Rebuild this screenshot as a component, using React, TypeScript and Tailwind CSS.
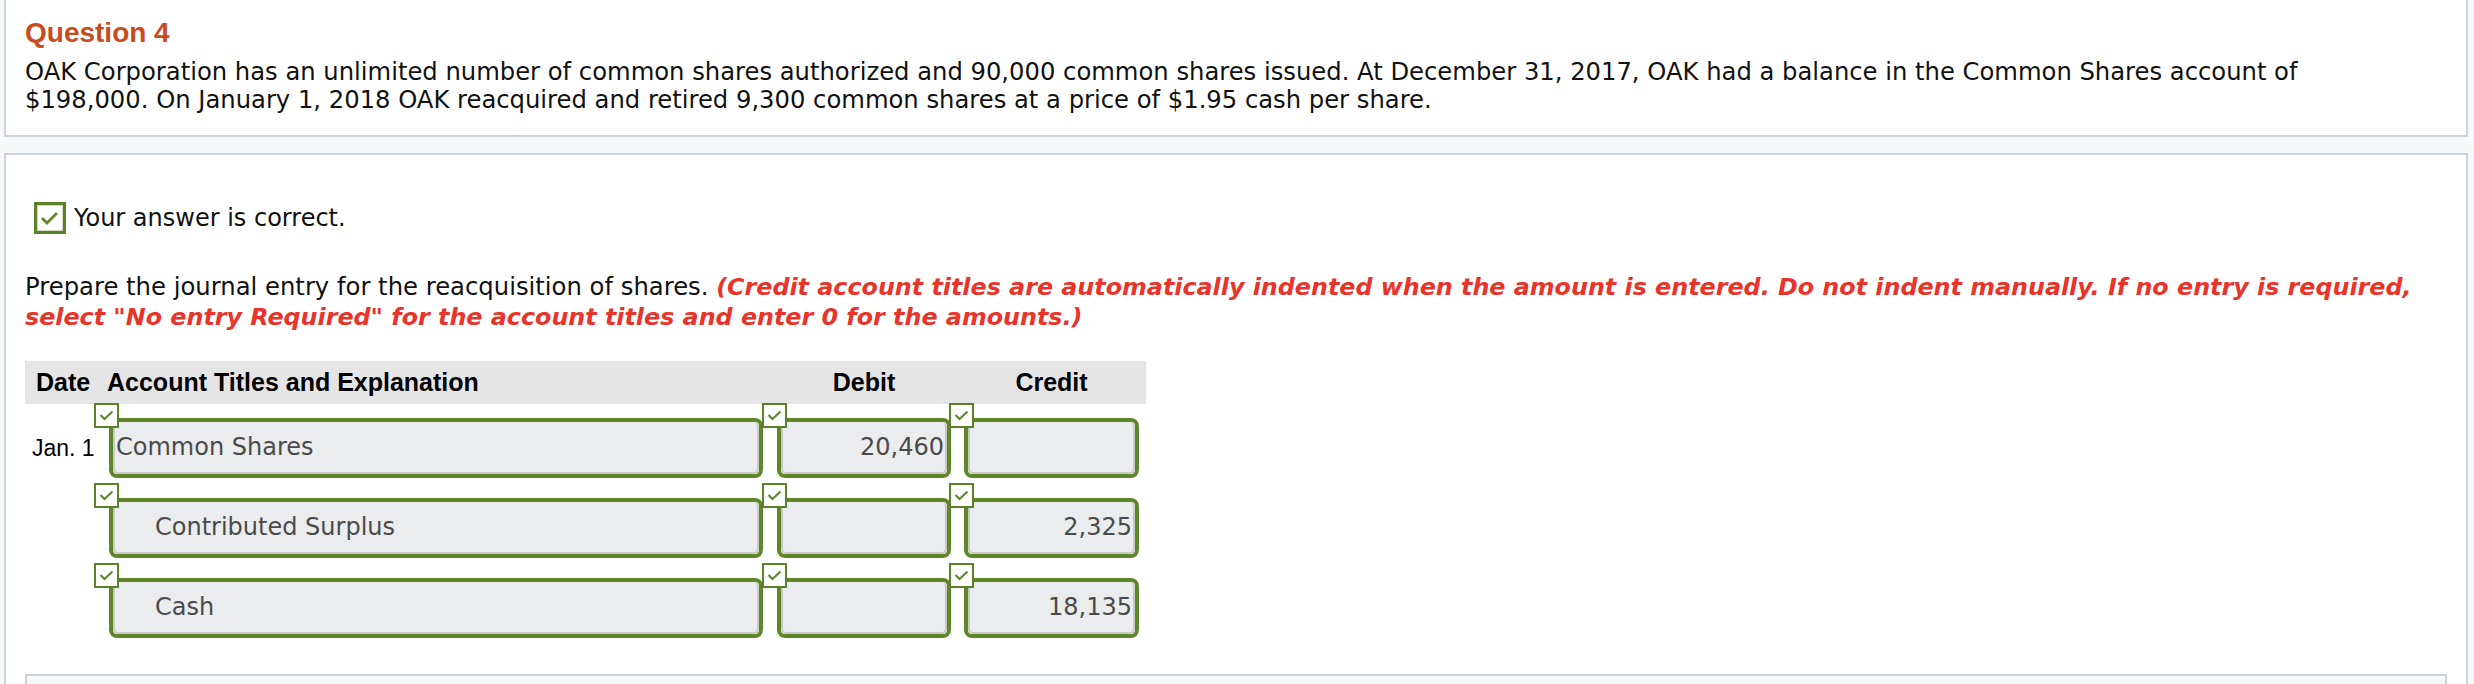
import React from "react";

const GREEN = "#5f8628";

function BigCheck() {
  return (
    <div className="flex h-[32px] w-[32px] items-center justify-center border-[3px] border-[#5b8226] bg-white">
      <div className="flex h-full w-full items-center justify-center border border-[#cfd9c4]">
        <svg width="20" height="16" viewBox="0 0 20 16">
          <polyline points="2,8 7,13 17,3" fill="none" stroke={GREEN} strokeWidth="2.8" />
        </svg>
      </div>
    </div>
  );
}

function SmallCheck() {
  return (
    <div className="absolute -left-[19px] -top-[19px] flex h-[25px] w-[25px] items-center justify-center border-2 border-[#5b8226] bg-white">
      <svg width="15" height="11" viewBox="0 0 15 11">
        <polyline points="1.5,5 5.5,9 13.5,1.5" fill="none" stroke={GREEN} strokeWidth="2" />
      </svg>
    </div>
  );
}

function Field({
  width,
  text,
  align,
  indent,
}: {
  width: string;
  text: string;
  align: "left" | "right";
  indent?: boolean;
}) {
  return (
    <div className={`pt-[14px] ${width}`}>
      <div className="relative h-[60px] rounded-[8px] border-[4px] border-[#5f8628]">
        <div
          className={`flex h-full items-center rounded-[5px] border-x-2 border-b-2 border-[#c7c8ca] bg-[#ebecee] text-[24px] text-[#4a4a4a] ${
            align === "right" ? "justify-end pr-[1px]" : indent ? "pl-[40px]" : "pl-[1px]"
          }`}
        >
          {text}
        </div>
        <SmallCheck />
      </div>
    </div>
  );
}

const rows = [
  { date: "Jan. 1", acct: "Common Shares", indent: false, debit: "20,460", credit: "" },
  { date: "", acct: "Contributed Surplus", indent: true, debit: "", credit: "2,325" },
  { date: "", acct: "Cash", indent: true, debit: "", credit: "18,135" },
];

export default function App() {
  return (
    <div className="h-[684px] w-[2474px] overflow-hidden bg-[#f7f8fa] font-['DejaVu_Sans',sans-serif] text-[#111]">
      {/* Question panel */}
      <div className="ml-[4px] h-[137px] w-[2464px] border-x-2 border-b-2 border-[#cdd3dd] bg-white pl-[19px] pt-[18px]">
        <div className="font-['Liberation_Sans',Arial,sans-serif] text-[28px] font-bold leading-[30px] text-[#c84b1e]">
          Question 4
        </div>
        <p className="mt-[10px] whitespace-nowrap text-[24.25px] leading-[28px]">
          OAK Corporation has an unlimited number of common shares authorized and 90,000 common shares issued. At December 31, 2017, OAK had a balance in the Common Shares account of
          <br />
          $198,000. On January 1, 2018 OAK reacquired and retired 9,300 common shares at a price of $1.95 cash per share.
        </p>
      </div>

      {/* Answer panel */}
      <div className="ml-[4px] mt-[16px] h-[600px] w-[2464px] border-x-2 border-t-2 border-[#cdd3dd] bg-white px-[19px] pt-[47px]">
        <div className="flex h-[32px] items-center">
          <div className="ml-[9px]">
            <BigCheck />
          </div>
          <span className="ml-[8px] text-[24px] leading-[28px]">Your answer is correct.</span>
        </div>

        <p className="mt-[38px] whitespace-nowrap text-[24.3px] leading-[30px]">
          Prepare the journal entry for the reacquisition of shares.{" "}
          <span className="text-[23.8px] font-bold italic text-[#e8342a]">
            (Credit account titles are automatically indented when the amount is entered. Do not indent manually. If no entry is required,
            <br />
            select "No entry Required" for the account titles and enter 0 for the amounts.)
          </span>
        </p>

        {/* Table header */}
        <div className="mt-[29px] flex h-[43px] w-[1121px] items-center bg-[#e5e5e5] font-['Liberation_Sans',Arial,sans-serif] text-[25px] font-bold text-black">
          <div className="w-[82px] pl-[11px]">Date</div>
          <div className="w-[670px]">Account Titles and Explanation</div>
          <div className="w-[174px] text-center">Debit</div>
          <div className="w-[13px]" />
          <div className="w-[175px] text-center">Credit</div>
        </div>

        {/* Rows */}
        <div className="flex flex-col">
          {rows.map((r, i) => (
            <div key={i} className="flex h-[80px]">
              <div className="w-[84px] pt-[14px]">
                <div className="flex h-[60px] items-center pl-[7px] font-['Liberation_Sans',Arial,sans-serif] text-[23px] text-black">
                  {r.date}
                </div>
              </div>
              <Field width="w-[654px]" text={r.acct} align="left" indent={r.indent} />
              <div className="w-[14px]" />
              <Field width="w-[174px]" text={r.debit} align="right" />
              <div className="w-[13px]" />
              <Field width="w-[175px]" text={r.credit} align="right" />
            </div>
          ))}
        </div>

        <div className="mt-[30px] h-[60px] border-x-2 border-t-2 border-[#cdd3dd] bg-[#f7f8fa]" />
      </div>
    </div>
  );
}
